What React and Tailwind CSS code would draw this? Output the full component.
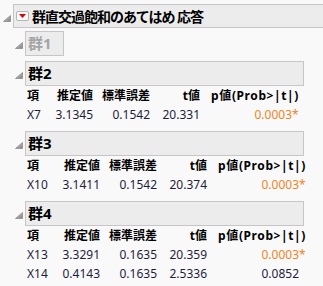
import React from "react";

const Tri = () => (
  <svg width="8" height="7" viewBox="0 0 8 7">
    <defs>
      <linearGradient id="tg" x1="0" y1="0" x2="1" y2="1">
        <stop offset="0" stopColor="#e0e0e0" />
        <stop offset="1" stopColor="#7a7a7a" />
      </linearGradient>
    </defs>
    <path d="M7.5 0.5 L7.5 6.5 L0.5 6.5 Z" fill="url(#tg)" stroke="#8c8c8c" strokeWidth="0.8" strokeLinejoin="round" />
  </svg>
);

const RedBtn = () => (
  <div className="w-[13px] h-[10px] border border-[#b4b4b4] rounded-[2px] bg-[#fafafa] flex items-center justify-center">
    <svg width="7" height="4" viewBox="0 0 7 4">
      <path d="M0 0 L7 0 L3.5 4 Z" fill="#e00000" />
    </svg>
  </div>
);

const cols3 = "grid grid-cols-[21px_52px_57px_50px_99px]";
const cols2 = "grid grid-cols-[14px_52px_57px_50px_99px]";

function Table({ rows, cols }) {
  return (
    <div className="pl-[2px] mt-[1px] text-[12px] text-[#1e1e3c]">
      <div className={cols + " h-[18px] items-center font-bold text-black"}>
        <div>項</div>
        <div className="text-right">推定値</div>
        <div className="text-right">標準誤差</div>
        <div className="text-right">t値</div>
        <div className="text-right whitespace-nowrap tracking-[0.6px]">p値(Prob&gt;|t|)</div>
      </div>
      {rows.map((r) => (
        <div key={r[0]} className={cols + " h-[19px] items-center"}>
          <div>{r[0]}</div>
          <div className="text-right">{r[1]}</div>
          <div className="text-right">{r[2]}</div>
          <div className="text-right">{r[3]}</div>
          <div className="text-right">
            {r[5] ? (
              <span className="text-[#f0841e]">
                {r[4]}
                <span className="inline-block w-[7px] text-left">*</span>
              </span>
            ) : (
              <span>
                {r[4]}
                <span className="inline-block w-[7px]"></span>
              </span>
            )}
          </div>
        </div>
      ))}
    </div>
  );
}

function GroupHead({ title, muted, wide }) {
  return (
    <div className="flex">
      <div className="w-[12px] pl-[2px] pt-[11px]">
        <Tri />
      </div>
      <div
        className={
          "h-[25px] border border-[#c6c6c6] bg-[#ececec] flex items-center pl-[2px] text-[15px] font-bold " +
          (wide ? "w-[279px] " : "w-[39px] ") +
          (muted ? "text-[#a4a4a4]" : "text-black")
        }
      >
        {title}
      </div>
    </div>
  );
}

export default function App() {
  return (
    <div
      className="w-[323px] h-[286px] bg-[#f9f9f9] overflow-hidden pt-[4px]"
      style={{ fontFamily: '"Noto Sans", "Noto Sans CJK JP", sans-serif' }}
    >
      <div className="flex">
        <div className="w-[13px] pl-[3px] pt-[11px]">
          <Tri />
        </div>
        <div className="flex-1 h-[24px] border border-r-0 border-[#c6c6c6] bg-[#ececec] flex items-center pl-[2px]">
          <RedBtn />
          <span className="ml-[3px] text-[14px] tracking-[-1px] font-bold text-black whitespace-nowrap">
            群直交過飽和のあてはめ 応答
          </span>
        </div>
      </div>
      <div className="pl-[13px]">
        <div className="mt-[3px]">
          <GroupHead title="群1" muted />
        </div>
        <div className="mt-[5px]">
          <GroupHead title="群2" wide />
          <div className="pl-[12px]">
            <Table cols={cols2} rows={[["X7", "3.1345", "0.1542", "20.331", "0.0003", true]]} />
          </div>
        </div>
        <div className="mt-[7px]">
          <GroupHead title="群3" wide />
          <div className="pl-[12px]">
            <Table cols={cols3} rows={[["X10", "3.1411", "0.1542", "20.374", "0.0003", true]]} />
          </div>
        </div>
        <div className="mt-[7px]">
          <GroupHead title="群4" wide />
          <div className="pl-[12px]">
            <Table
              cols={cols3}
              rows={[
                ["X13", "3.3291", "0.1635", "20.359", "0.0003", true],
                ["X14", "0.4143", "0.1635", "2.5336", "0.0852", false],
              ]}
            />
          </div>
        </div>
      </div>
    </div>
  );
}
